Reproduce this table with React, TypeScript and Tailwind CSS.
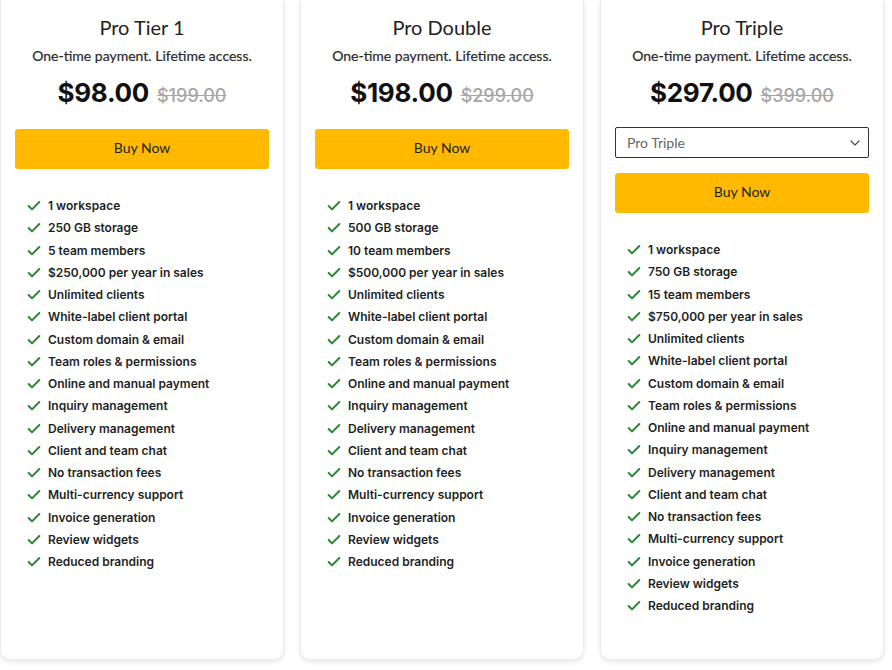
import { Check, ChevronDown } from "lucide-react";

const features = (storage: string, members: string, sales: string) => [
  "1 workspace",
  storage,
  members,
  sales,
  "Unlimited clients",
  "White-label client portal",
  "Custom domain & email",
  "Team roles & permissions",
  "Online and manual payment",
  "Inquiry management",
  "Delivery management",
  "Client and team chat",
  "No transaction fees",
  "Multi-currency support",
  "Invoice generation",
  "Review widgets",
  "Reduced branding",
];

const plans = [
  {
    name: "Pro Tier 1",
    price: "$98.00",
    was: "$199.00",
    select: false,
    items: features("250 GB storage", "5 team members", "$250,000 per year in sales"),
  },
  {
    name: "Pro Double",
    price: "$198.00",
    was: "$299.00",
    select: false,
    items: features("500 GB storage", "10 team members", "$500,000 per year in sales"),
  },
  {
    name: "Pro Triple",
    price: "$297.00",
    was: "$399.00",
    select: true,
    items: features("750 GB storage", "15 team members", "$750,000 per year in sales"),
  },
];

function PlanCard({ plan }: { plan: (typeof plans)[number] }) {
  return (
    <div className="flex w-[284px] shrink-0 flex-col rounded-b-[10px] border border-t-0 border-[#ececec] bg-white px-[14px] pt-[13px] shadow-[0_2px_5px_rgba(0,0,0,0.10)]">
      <h2 className="text-center text-[20px] leading-[28px] text-[#222] [font-family:Lato,sans-serif]">
        {plan.name}
      </h2>
      <p className="mt-[5px] text-center text-[14px] leading-[20px] text-[#2a2a2a] [font-family:Lato,sans-serif] [-webkit-text-stroke:0.2px_#2a2a2a]">
        One-time payment. Lifetime access.
      </p>
      <div className="mt-[9px] flex items-baseline justify-center gap-[8px] [font-family:Inter,sans-serif]">
        <span className="text-[26px] font-bold leading-[36px] tracking-[-0.3px] text-[#111]">
          {plan.price}
        </span>
        <span className="text-[18px] font-medium text-[#a6a6a6] line-through">
          {plan.was}
        </span>
      </div>
      {plan.select && (
        <div className="mt-[16px] flex h-[31px] items-center justify-between rounded-[2px] border border-[#333] pl-[11px] pr-[5px] text-[14px] text-[#666] [font-family:Lato,sans-serif]">
          <span>Pro Triple</span>
          <ChevronDown size={16} strokeWidth={1.6} className="text-[#444]" />
        </div>
      )}
      <button
        className={`${plan.select ? "mt-[15px]" : "mt-[18px]"} h-[40px] w-full rounded-[3px] bg-[#ffba00] pb-[3px] text-[14px] text-[#222] [font-family:Lato,sans-serif]`}
      >
        Buy Now
      </button>
      <ul className="mt-[26px] flex flex-col pl-[11px] [font-family:Inter,sans-serif]">
        {plan.items.map((item) => (
          <li
            key={item}
            className="flex h-[22.25px] items-center gap-[6px] text-[12px] font-semibold text-[#1f1f1f]"
          >
            <Check size={16} strokeWidth={3} className="text-[#2b8636]" />
            <span>{item}</span>
          </li>
        ))}
      </ul>
    </div>
  );
}

export default function App() {
  return (
    <div className="flex h-[670px] gap-4 bg-white pr-2 pb-[10px]">
      {plans.map((plan) => (
        <PlanCard key={plan.name} plan={plan} />
      ))}
    </div>
  );
}
